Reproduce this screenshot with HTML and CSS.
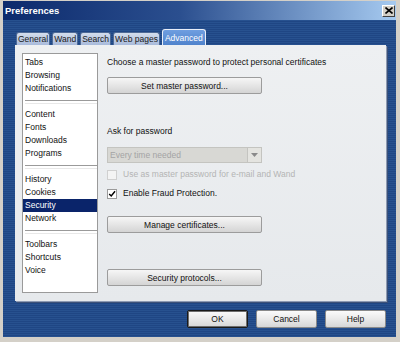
FILE: index.html
```html
<!DOCTYPE html>
<html lang="en">
<head>
  <meta charset="UTF-8" />
  <title>Preferences</title>
  <link rel="stylesheet" href="styles.css">
</head>
<body>

  <!-- Dialog window -->
  <div class="window">

    <!-- Title bar -->
    <div class="titlebar">
      <span class="title">Preferences</span>
      <span class="close">
        <svg width="8" height="7" viewBox="0 0 8 7">
          <path d="M0.5 0.5 L7.5 6.5 M7.5 0.5 L0.5 6.5" stroke="#000" stroke-width="1.6" />
        </svg>
      </span>
    </div>

    <div class="client">

      <!-- Tabs -->
      <div class="tabs">
        <div class="tab">General</div>
        <div class="tab">Wand</div>
        <div class="tab">Search</div>
        <div class="tab">Web pages</div>
        <div class="tab active">Advanced</div>
      </div>

      <!-- Tab page -->
      <div class="panel">
        <ul class="sections">
          <li>Tabs</li>
          <li>Browsing</li>
          <li>Notifications</li>
          <li class="sep"></li>
          <li>Content</li>
          <li>Fonts</li>
          <li>Downloads</li>
          <li>Programs</li>
          <li class="sep"></li>
          <li>History</li>
          <li>Cookies</li>
          <li class="selected">Security</li>
          <li>Network</li>
          <li class="sep"></li>
          <li>Toolbars</li>
          <li>Shortcuts</li>
          <li>Voice</li>
        </ul>

        <div class="page">
          <p class="text">Choose a master password to protect personal certificates</p>
          <button class="btn wide">Set master password...</button>

          <p class="text ask">Ask for password</p>
          <div class="select disabled">
            <span>Every time needed</span>
            <span class="arrow">
              <svg width="7" height="4" viewBox="0 0 7 4"><path d="M0 0 H7 L3.5 4 Z" fill="#8a8a8a" /></svg>
            </span>
          </div>

          <label class="check disabled">
            <span class="box"></span>
            Use as master password for e-mail and Wand
          </label>
          <label class="check checked">
            <span class="box">
              <svg width="10" height="10" viewBox="0 0 10 10">
                <path d="M1.5 5 L4 7.5 L8.8 1.5" stroke="#000" stroke-width="1.8" fill="none" />
              </svg>
            </span>
            Enable Fraud Protection.
          </label>

          <button class="btn wide manage">Manage certificates...</button>
          <button class="btn wide protocols">Security protocols...</button>
        </div>
      </div>

      <!-- Dialog buttons -->
      <div class="actions">
        <button class="btn dialog default">OK</button>
        <button class="btn dialog">Cancel</button>
        <button class="btn dialog">Help</button>
      </div>
    </div>
  </div>

</body>
</html>
```

FILE: styles.css
```css
* {
  box-sizing: border-box;
}

body {
  margin: 0;
  font-family: 'Liberation Sans', Arial, sans-serif;
  font-size: 8.5px;
  color: #111;
}

.window {
  width: 400px;
  height: 342px;
  background: #d4d0c8;
  padding: 1px 4px 5px 3px;
  display: flex;
  flex-direction: column;
}

/* Title bar */
.titlebar {
  height: 19px;
  background: linear-gradient(to right, #0c2a6c, #2b4f8f 45%, #a6caf0);
  display: flex;
  align-items: center;
  justify-content: space-between;
  padding: 0 1px 0 2px;
}

.title {
  color: #fff;
  font-weight: bold;
  font-size: 9.5px;
}

.close {
  width: 13px;
  height: 12px;
  background: #d4d0c8;
  border: 1px solid;
  border-color: #fff #404040 #404040 #fff;
  display: flex;
  align-items: center;
  justify-content: center;
}

/* Client area */
.client {
  flex: 1;
  background: repeating-linear-gradient(to bottom, #27518f 0, #27518f 1px, #1f4684 1px, #1f4684 2px);
  padding: 9px 10px 0 12px;
  display: flex;
  flex-direction: column;
}

.tabs {
  display: flex;
  align-items: flex-end;
  gap: 2px;
  height: 16px;
  padding-left: 1px;
}

.tab {
  height: 13px;
  padding: 0 1px;
  border: 1px solid #4e6a96;
  border-bottom: none;
  border-radius: 3px 3px 0 0;
  background: linear-gradient(to bottom, #d3ddec, #a8badb);
  display: flex;
  align-items: center;
  color: #1a1a1a;
}

.tab.active {
  height: 16px;
  padding: 0 2px;
  border: 1px solid #e8eef8;
  border-bottom: none;
  background: linear-gradient(to bottom, #6f9ee0, #5083cc);
  color: #fff;
}

.panel {
  height: 256px;
  background: linear-gradient(to bottom, #eef0f2, #e6e9ec);
  box-shadow: 1px 1px 0 #8c9ab3, 2px 2px 0 #3c5178;
  padding: 8px 7px;
  display: flex;
  gap: 9px;
}

/* Section list */
.sections {
  list-style: none;
  margin: 0;
  width: 76px;
  height: 240px;
  padding: 2px 0;
  background: #fff;
  border: 1px solid #9a9a9a;
}

.sections li {
  height: 13px;
  line-height: 13px;
  padding-left: 2px;
}

.sections li.selected {
  background: #0a246a;
  color: #fff;
}

.sections li.sep {
  height: 13px;
  display: flex;
  align-items: center;
}

.sections li.sep::after {
  content: "";
  display: block;
  width: 100%;
  height: 2px;
  border-top: 1px solid #9a9a9a;
  border-bottom: 1px solid #e8e8e8;
}

/* Security page */
.page {
  flex: 1;
  padding-top: 3px;
  display: flex;
  flex-direction: column;
  align-items: flex-start;
}

.text {
  margin: 0;
  line-height: 13px;
}

.btn {
  font-family: inherit;
  font-size: 8.5px;
  color: #111;
  background: linear-gradient(to bottom, #f6f6f6, #e2e2e2 60%, #d4d4d4);
  border: 1px solid #9c9c9c;
  border-radius: 2px;
  padding: 0;
}

.btn.wide {
  width: 155px;
  height: 17px;
  margin-top: 8px;
}

.text.ask {
  margin-top: 31px;
}

.select {
  margin-top: 9px;
  width: 155px;
  height: 16px;
  display: flex;
  align-items: center;
  justify-content: space-between;
  padding-left: 2px;
  border: 1px solid #c4c4c0;
}

.select.disabled {
  background: #d8d8d4;
  color: #a4a4a4;
}

.select .arrow {
  width: 14px;
  height: 14px;
  background: #e4e4e0;
  border-left: 1px solid #c4c4c0;
  display: flex;
  align-items: center;
  justify-content: center;
}

.check {
  display: flex;
  align-items: center;
  gap: 6px;
  height: 13px;
  line-height: 13px;
  margin-top: 5px;
}

.check.checked {
  margin-top: 6px;
}

.check .box {
  width: 10px;
  height: 10px;
  background: #fff;
  border: 1px solid #9a9a9a;
  display: flex;
  align-items: center;
  justify-content: center;
}

.check.disabled {
  color: #b4b4b4;
}

.check.disabled .box {
  background: #f4f4f4;
  border-color: #d0d0d0;
}

.btn.wide.manage {
  margin-top: 16px;
}

.btn.wide.protocols {
  margin-top: 36px;
}

/* OK / Cancel / Help */
.actions {
  display: flex;
  justify-content: flex-end;
  gap: 8px;
  margin-top: 9px;
}

.btn.dialog {
  width: 61px;
  height: 18px;
  background: linear-gradient(to bottom, #fbfbfb, #e6e6e6 60%, #d6d6d6);
  border-color: #8a8a8a;
}

.btn.dialog.default {
  border: 1px solid #1a1a1a;
  box-shadow: inset 0 0 0 1px #6e6e6e;
}
```
